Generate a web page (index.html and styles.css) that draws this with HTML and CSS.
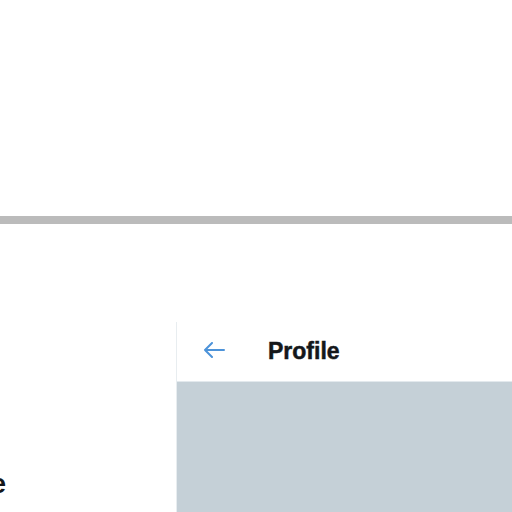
FILE: index.html
```html
<!DOCTYPE html>
<html lang="en">
<head>
  <meta charset="UTF-8">
  <title>Profile</title>
  <link rel="stylesheet" href="styles.css">
</head>
<body>
  <div class="top"></div>
  <div class="divider"></div>
  <div class="app">
    <nav class="sidebar">
      <a class="nav-item" href="#">Profile</a>
    </nav>
    <main class="column">
      <header class="col-header">
        <a class="back" href="#">
          <svg width="22" height="16" viewBox="0 0 22 16">
            <path d="M21 8H2M9 1L2 8l7 7" fill="none" stroke="#4d93d9" stroke-width="2" stroke-linecap="round" stroke-linejoin="round"/>
          </svg>
        </a>
        <h2>Profile</h2>
      </header>
      <div class="banner"></div>
    </main>
  </div>
</body>
</html>
```

FILE: styles.css
```css
body {
  margin: 0;
  background: #fff;
  font-family: "Liberation Sans", Arial, sans-serif;
  overflow: hidden;
  height: 512px;
}
.top {
  height: 216px;
}
.divider {
  height: 8px;
  background: #bbbbbb;
}
.app {
  display: flex;
  padding-top: 98px;
  height: 190px;
}
.sidebar {
  width: 176px;
  flex-shrink: 0;
  padding-top: 146px;
}
.nav-item {
  display: block;
  margin-left: -81px;
  font-size: 28px;
  font-weight: 700;
  line-height: 32px;
  color: #14171a;
  text-decoration: none;
}
.column {
  flex: 1;
  border-left: 1px solid #e8edf0;
  display: flex;
  flex-direction: column;
}
.col-header {
  height: 59px;
  display: flex;
  align-items: center;
  border-bottom: 1px solid #e3e9ed;
}
.back {
  display: flex;
  margin-left: 26px;
  margin-top: -3px;
}
.col-header h2 {
  margin: 0 0 0 43px;
  font-size: 23px;
  font-weight: 700;
  color: #14171a;
  -webkit-text-stroke: 0.5px #14171a;
}
.banner {
  flex: 1;
  background: #c5d0d7;
}
```
